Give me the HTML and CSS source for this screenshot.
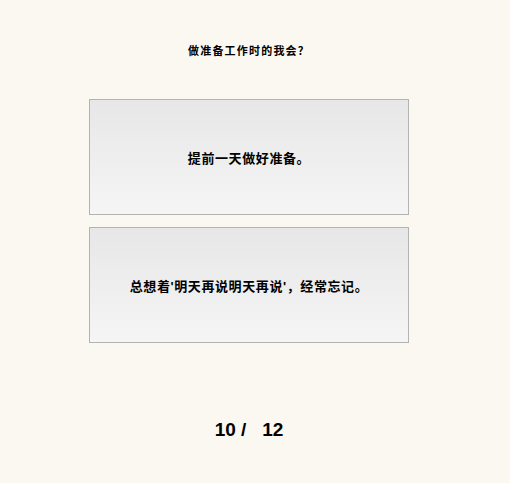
FILE: index.html
```html
<!DOCTYPE html>
<html lang="zh">
<head>
<meta charset="utf-8">
<link rel="stylesheet" href="styles.css">
</head>
<body>
<div class="page">
  <h1 class="question">做准备工作时的我会？</h1>
  <div class="options">
    <div class="option">提前一天做好准备。</div>
    <div class="option">总想着'明天再说明天再说'，经常忘记。</div>
  </div>
  <div class="counter">10 /&nbsp;&nbsp;&nbsp;12</div>
</div>
</body>
</html>
```
FILE: styles.css
```css
html, body {
  margin: 0;
  padding: 0;
  background: #fbf7f1;
}
.page {
  width: 498px;
  height: 483px;
  display: flex;
  flex-direction: column;
  align-items: center;
  font-family: "Liberation Sans", "Noto Sans CJK SC", sans-serif;
  color: #000;
}
.question {
  margin: 44px 0 0;
  font-size: 11px;
  line-height: 14px;
  font-weight: bold;
  letter-spacing: 1.2px;
}
.options {
  margin-top: 41px;
  display: flex;
  flex-direction: column;
  gap: 12px;
}
.option {
  width: 318px;
  height: 114px;
  border: 1px solid #b3b3b3;
  background: linear-gradient(#e7e7e7, #f5f5f5);
  display: flex;
  align-items: center;
  justify-content: center;
  font-size: 13px;
  font-weight: bold;
  letter-spacing: 0.6px;
}
.counter {
  margin-top: 76px;
  font-size: 19px;
  line-height: 22px;
  font-weight: bold;
  white-space: pre;
}
```
